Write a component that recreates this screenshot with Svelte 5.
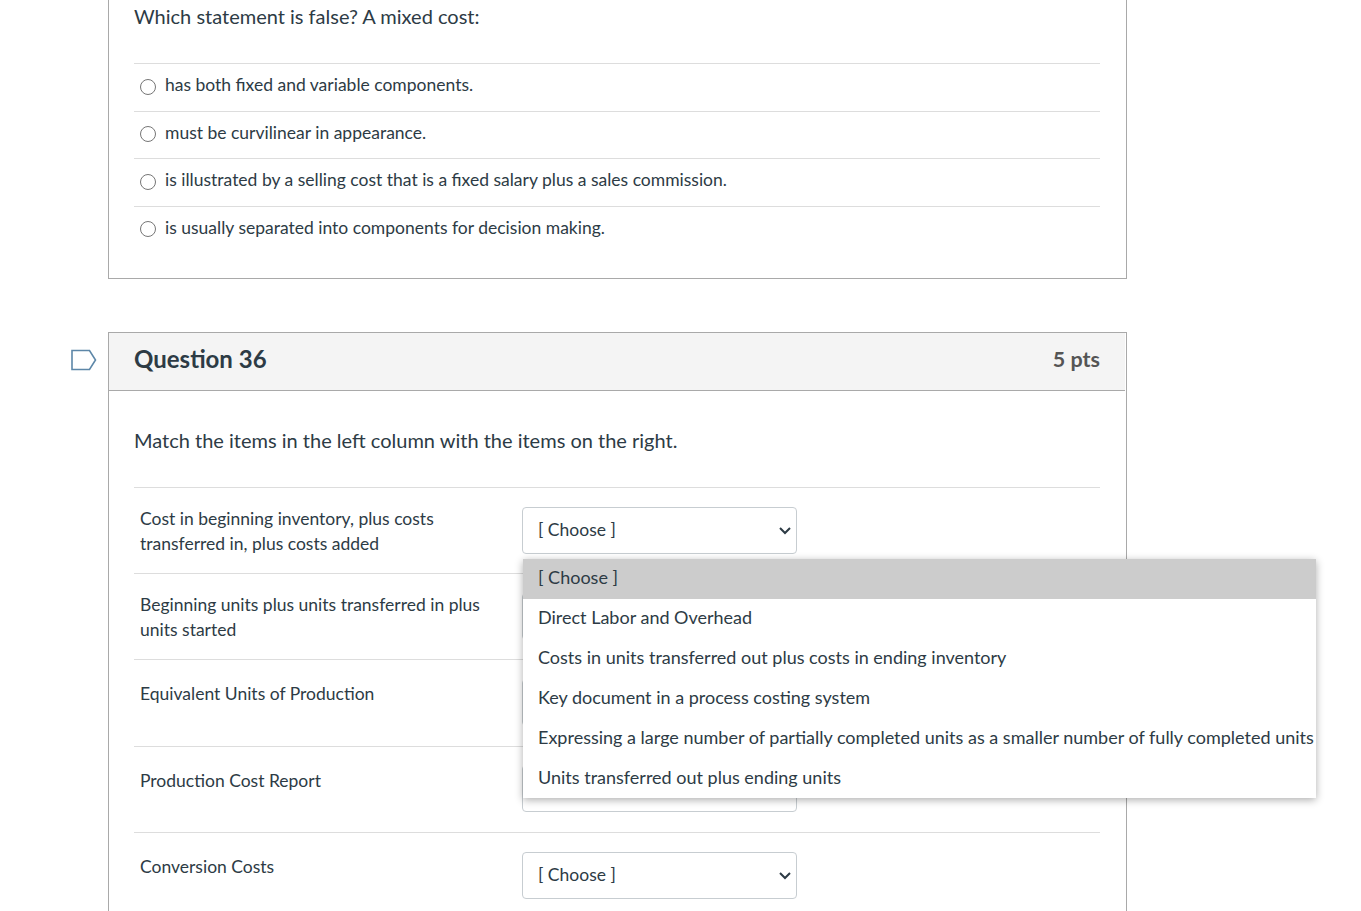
<script>
  const answers = [
    'has both fixed and variable components.',
    'must be curvilinear in appearance.',
    'is illustrated by a selling cost that is a fixed salary plus a sales commission.',
    'is usually separated into components for decision making.'
  ];
  const matches = [
    'Cost in beginning inventory, plus costs transferred in, plus costs added',
    'Beginning units plus units transferred in plus units started',
    'Equivalent Units of Production',
    'Production Cost Report',
    'Conversion Costs'
  ];
  const options = [
    '[ Choose ]',
    'Direct Labor and Overhead',
    'Costs in units transferred out plus costs in ending inventory',
    'Key document in a process costing system',
    'Expressing a large number of partially completed units as a smaller number of fully completed units',
    'Units transferred out plus ending units'
  ];
</script>

<div class="page">
  <section class="card first">
    <div class="body">
      <p class="qtext">Which statement is false? A mixed cost:</p>
      <div class="answers">
        {#each answers as a}
          <label class="answer"><span class="radio"></span><span class="atext">{a}</span></label>
        {/each}
      </div>
    </div>
  </section>

  <div class="qwrap">
    <svg class="flag" width="26" height="22" viewBox="0 0 26 22" aria-hidden="true">
      <path d="M1 1.5H18.5L24.5 11L18.5 20.5H1Z" fill="#fff" stroke="#5d87a8" stroke-width="1.6" />
    </svg>
    <section class="card second">
      <header class="head">
        <h2>Question 36</h2>
        <span class="pts">5 pts</span>
      </header>
      <div class="body two">
        <p class="qtext">Match the items in the left column with the items on the right.</p>
        <div class="matches">
          {#each matches as m}
            <div class="match">
              <div class="mlabel" class:single={m.length < 40}>{m}</div>
              <select class="sel"><option>[ Choose ]</option></select>
            </div>
          {/each}
        </div>
      </div>
    </section>
    <ul class="menu">
      {#each options as o, i}
        <li class:active={i === 0}>{o}</li>
      {/each}
    </ul>
  </div>
</div>

<style>
  :global(body) {
    margin: 0;
    background: #fff;
    overflow: hidden;
  }
  .page {
    height: 911px;
    overflow: hidden;
    padding-left: 108px;
    box-sizing: border-box;
    font-family: Lato, "Liberation Sans", sans-serif;
    color: #2d3b45;
    font-size: 17.5px;
    font-variant-ligatures: common-ligatures;
    text-rendering: optimizeLegibility;
  }
  .card {
    width: 1019px;
    box-sizing: border-box;
    border: 1px solid #a9a9a9;
    background: #fff;
  }
  .first {
    margin-top: -20px;
    height: 299px;
    padding: 0 26px 0 25px;
  }
  .first .body {
    padding-top: 18px;
  }
  .qtext {
    margin: 0;
    font-size: 20px;
    line-height: 34px;
  }
  .answers {
    margin-top: 30px;
  }
  .answer {
    display: flex;
    align-items: center;
    gap: 9px;
    height: 47.5px;
    box-sizing: border-box;
    border-top: 1px solid #ddd;
    padding-left: 6px;
    line-height: 25px;
  }
  .atext {
    margin-bottom: 5px;
  }
  .radio {
    width: 14px;
    height: 14px;
    border: 1px solid #767676;
    border-radius: 50%;
    background: #fff;
    flex: none;
    margin-bottom: 1px;
  }
  .qwrap {
    position: relative;
    margin-top: 53px;
  }
  .flag {
    position: absolute;
    left: -37px;
    top: 17px;
  }
  .head {
    height: 58px;
    box-sizing: border-box;
    background: #f4f4f4;
    border-bottom: 1px solid #a9a9a9;
    display: flex;
    align-items: center;
    justify-content: space-between;
    padding: 0 25px 5px;
    margin-right: 1px;
  }
  h2 {
    margin: 0;
    font-size: 24px;
    font-weight: 700;
    line-height: 1;
  }
  .pts {
    font-size: 21.5px;
    font-weight: 700;
    color: #555;
  }
  .second {
    padding: 0;
    height: 700px;
  }
  .two {
    padding: 32px 26px 0 25px;
  }
  .matches {
    margin-top: 29.85px;
  }
  .match {
    border-top: 1px solid #ddd;
    box-sizing: border-box;
    height: 86.25px;
    padding: 18.4px 0 0 6px;
    display: flex;
    gap: 42px;
  }
  .mlabel {
    width: 340px;
    line-height: 25px;
  }
  .mlabel.single {
    padding-top: 2.6px;
  }
  .sel {
    appearance: none;
    width: 275px;
    height: 47px;
    box-sizing: border-box;
    border: 1px solid #c7cdd1;
    border-radius: 4px;
    background-color: #fff;
    background-image: url("data:image/svg+xml,%3Csvg xmlns='http://www.w3.org/2000/svg' width='14' height='10' viewBox='0 0 14 10'%3E%3Cpath d='M2 2L7 7L12 2' fill='none' stroke='%232d3b45' stroke-width='2'/%3E%3C/svg%3E");
    background-repeat: no-repeat;
    background-position: right 4px top 18px;
    color: #2d3b45;
    font-family: inherit;
    font-size: 17.5px;
    padding: 0 11px 2px 15px;
    margin-top: 0.5px;
  }
  .menu {
    position: absolute;
    left: 415px;
    top: 227px;
    width: 793px;
    height: 239px;
    margin: 0;
    padding: 0;
    list-style: none;
    background: #fff;
    box-shadow: 0 2px 8px rgba(0, 0, 0, 0.32);
    overflow: hidden;
  }
  .menu li {
    height: 40px;
    line-height: 36px;
    font-size: 18px;
    padding-left: 15px;
    white-space: nowrap;
  }
  .menu li.active {
    background: #ccc;
  }
</style>
